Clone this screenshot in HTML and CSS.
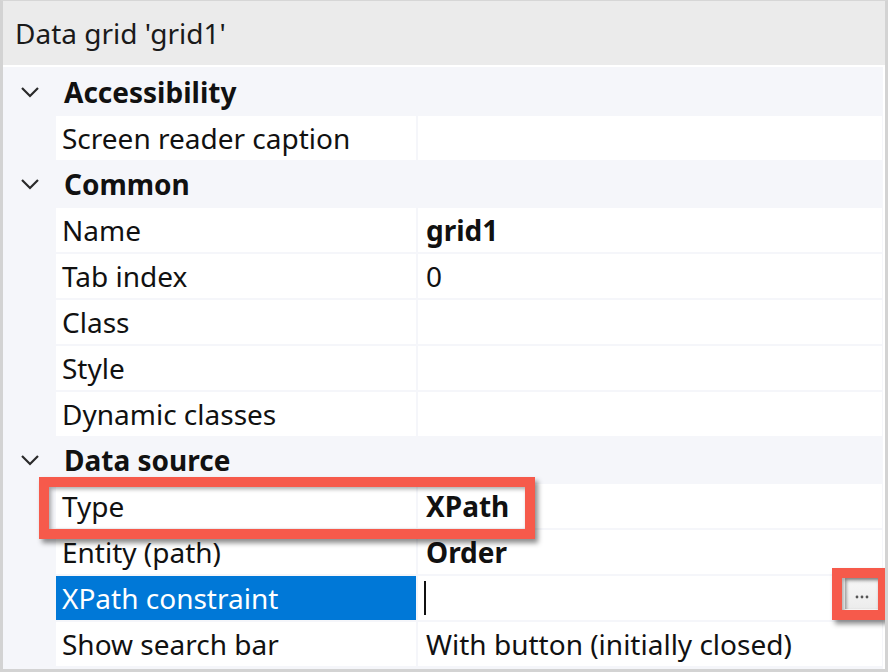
FILE: index.html
```html
<!DOCTYPE html>
<html>
<head>
<meta charset="utf-8">
<link rel="stylesheet" href="styles.css">
</head>
<body>
<div class="panel">
  <div class="title">Data grid 'grid1'</div>
  <div class="props">
    <div class="row section"><span class="chev"><svg width="20" height="12" viewBox="0 0 20 12"><path d="M2 2 L10 10 L18 2" fill="none" stroke="#2a2a2a" stroke-width="2.2"/></svg></span><span class="sname">Accessibility</span></div>
    <div class="row"><span class="label">Screen reader caption</span><span class="value"></span></div>
    <div class="row section"><span class="chev"><svg width="20" height="12" viewBox="0 0 20 12"><path d="M2 2 L10 10 L18 2" fill="none" stroke="#2a2a2a" stroke-width="2.2"/></svg></span><span class="sname">Common</span></div>
    <div class="row"><span class="label">Name</span><span class="value bold">grid1</span></div>
    <div class="row"><span class="label">Tab index</span><span class="value">0</span></div>
    <div class="row"><span class="label">Class</span><span class="value"></span></div>
    <div class="row"><span class="label">Style</span><span class="value"></span></div>
    <div class="row"><span class="label">Dynamic classes</span><span class="value"></span></div>
    <div class="row section"><span class="chev"><svg width="20" height="12" viewBox="0 0 20 12"><path d="M2 2 L10 10 L18 2" fill="none" stroke="#2a2a2a" stroke-width="2.2"/></svg></span><span class="sname">Data source</span></div>
    <div class="row"><span class="label">Type</span><span class="value bold">XPath</span></div>
    <div class="row"><span class="label">Entity (path)</span><span class="value bold">Order</span></div>
    <div class="row"><span class="label selected">XPath constraint</span><span class="value editing"><span class="caret"></span><span class="dots"><svg width="14" height="4" viewBox="0 0 14 4"><circle cx="2" cy="2" r="1.4" fill="#555"/><circle cx="7" cy="2" r="1.4" fill="#555"/><circle cx="12" cy="2" r="1.4" fill="#555"/></svg></span></span></div>
    <div class="row"><span class="label">Show search bar</span><span class="value">With button (initially closed)</span></div>
  </div>
  <div class="mark mark-type"></div>
  <div class="mark mark-btn"></div>
</div>
</body>
</html>
```
FILE: styles.css
```css
html, body {
  margin: 0;
  padding: 0;
  background: #ffffff;
}
body {
  font-family: "Noto Sans", "Open Sans", sans-serif;
  color: #111111;
}
.panel {
  position: relative;
  width: 888px;
  height: 672px;
  box-sizing: border-box;
  border: 3px solid #d3d3d3;
  border-top: 1px solid #d6d6d6;
  background: #ffffff;
  overflow: hidden;
}
.title {
  height: 64px;
  background: #ebebeb;
  box-sizing: border-box;
  padding-left: 12px;
  display: flex;
  align-items: center;
  font-size: 28px;
  margin-bottom: 2px;
  color: #1a1a1a;
}
.props {
  background: #f5f6fa;
  margin-right: 2px;
  height: 602px;
  box-sizing: border-box;
  padding-top: 3px;
  display: flex;
  flex-direction: column;
  gap: 2px;
}
.row {
  height: 44px;
  display: grid;
  grid-template-columns: 51px 360px 1fr;
  column-gap: 2px;
  font-size: 28px;
  line-height: 44px;
}
.row .label {
  grid-column: 2;
  background: #ffffff;
  padding-left: 6px;
  white-space: nowrap;
}
.row .value {
  grid-column: 3;
  background: #ffffff;
  padding-left: 8px;
  white-space: nowrap;
  margin-right: 1px;
}
.bold { font-weight: 700; }
.section {
  display: flex;
  align-items: center;
}
.chev {
  width: 59px;
  display: flex;
  justify-content: flex-start;
  padding-left: 17px;
  box-sizing: border-box;
  height: 44px;
  align-items: center;
}
.sname {
  font-weight: 700;
}
.label.selected {
  background: #0078d7;
  color: #ffffff;
}
.value.editing {
  display: flex;
  align-items: center;
  padding-left: 6px;
  position: relative;
}
.caret {
  width: 2px;
  height: 34px;
  background: #111;
}
.dots {
  position: absolute;
  right: 4px;
  top: 2px;
  width: 33px;
  height: 31px;
  background: linear-gradient(#f7f7f7, #ececec);
  box-shadow: inset 2px 2px 3px rgba(0,0,0,0.25);
  display: flex;
  align-items: center;
  justify-content: center;
  padding-top: 6px;
  box-sizing: border-box;
}
.mark {
  position: absolute;
  border: 10px solid #f65a4b;
  box-shadow: 3px 4px 5px rgba(0,0,0,0.45), inset 2px 2px 4px rgba(0,0,0,0.35);
}
.mark-type {
  left: 36px;
  top: 476px;
  width: 476px;
  height: 42px;
}
.mark-btn {
  left: 829px;
  top: 567px;
  width: 36px;
  height: 32px;
}
```
